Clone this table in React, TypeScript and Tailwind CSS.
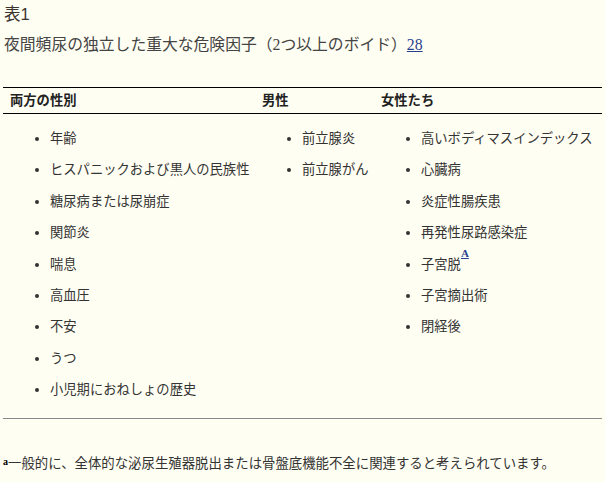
import React from "react";

const col1 = [
  "年齢",
  "ヒスパニックおよび黒人の民族性",
  "糖尿病または尿崩症",
  "関節炎",
  "喘息",
  "高血圧",
  "不安",
  "うつ",
  "小児期におねしょの歴史",
];
const col2 = ["前立腺炎", "前立腺がん"];
const col3 = [
  "高いボディマスインデックス",
  "心臓病",
  "炎症性腸疾患",
  "再発性尿路感染症",
  "子宮脱",
  "子宮摘出術",
  "閉経後",
];

function List({ items }: { items: string[] }) {
  return (
    <ul className="list-disc pl-10 pt-[9px] text-[13.3px] leading-[31.4px] text-[#333]">
      {items.map((t) => (
        <li key={t}>
          {t}
          {t === "子宮脱" && (
            <sup className="text-[11px] font-bold text-[#2a3f8f] underline align-[6px] leading-none">A</sup>
          )}
        </li>
      ))}
    </ul>
  );
}

export default function App() {
  return (
    <div
      className="min-h-[482px] w-[605px] bg-[#fffef2] px-[3px] text-[#333]"
      style={{ fontFamily: '"Liberation Serif", "Noto Sans CJK JP", serif' }}
    >
      <div
        className="pt-[4px] pl-[1px] text-[16.5px] leading-[20px] text-[#3a3330]"
        style={{ fontFamily: '"Liberation Sans", "Noto Sans CJK JP", sans-serif' }}
      >
        表1
      </div>
      <div className="mt-[11px] pl-[1px] text-[15.8px] leading-[20px] text-[#444]">
        夜間頻尿の独立した重大な危険因子（2つ以上のボイド）
        <a className="text-[#2a3f8f] underline">28</a>
      </div>
      <div className="mt-[32px] border-t border-b border-black grid grid-cols-[252px_119px_228px] text-[13.3px] font-bold leading-[25px] text-[#222]">
        <div className="pl-[7px]">両方の性別</div>
        <div className="pl-[7px]">男性</div>
        <div className="pl-[7px]">女性たち</div>
      </div>
      <div className="grid grid-cols-[252px_119px_228px] border-b border-[#888] pb-[12px]">
        <div className="pl-[7px]">
          <List items={col1} />
        </div>
        <div className="pl-[7px]">
          <List items={col2} />
        </div>
        <div className="pl-[7px]">
          <List items={col3} />
        </div>
      </div>
      <div className="mt-[35px] flex items-baseline text-[13.4px] leading-[20px] text-[#333]">
        <span className="relative -top-[3px] text-[10px] font-bold text-black leading-none">a</span>
        <span>一般的に、全体的な泌尿生殖器脱出または骨盤底機能不全に関連すると考えられています。</span>
      </div>
    </div>
  );
}
